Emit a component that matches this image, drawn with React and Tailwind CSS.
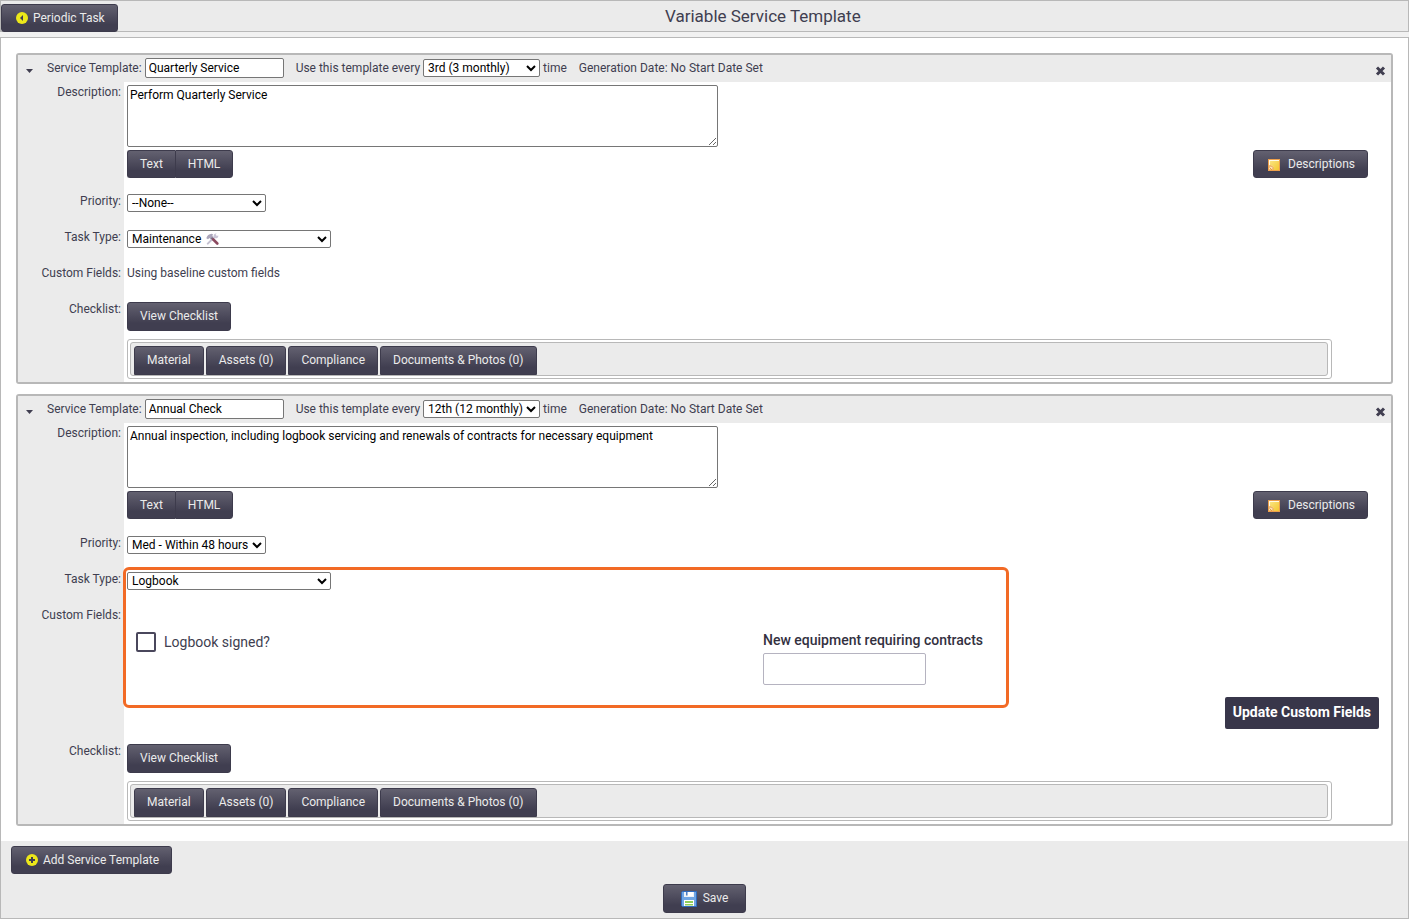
import { useId } from "react";
import clsx from "clsx";

const templates = [
  {
    name: "Quarterly Service",
    every: "3rd (3 monthly)",
    description: "Perform Quarterly Service",
    priority: "--None--",
    taskType: "Maintenance",
    hasCustomFields: false,
  },
  {
    name: "Annual Check",
    every: "12th (12 monthly)",
    description:
      "Annual inspection, including logbook servicing and renewals of contracts for necessary equipment",
    priority: "Med - Within 48 hours",
    taskType: "Logbook",
    hasCustomFields: true,
  },
];

const tabs = ["Material", "Assets (0)", "Compliance", "Documents & Photos (0)"];

const BackIcon = () => (
  <svg width="12" height="12" viewBox="0 0 12 12" aria-hidden="true">
    <circle cx="6" cy="6" r="6" fill="#ece81a" />
    <path d="M7 3v6L4 6z" fill="#403e50" />
  </svg>
);

const AddIcon = () => (
  <svg width="12" height="12" viewBox="0 0 12 12" aria-hidden="true">
    <circle cx="6" cy="6" r="6" fill="#ece81a" />
    <path d="M5 3h2v2h2v2H7v2H5V7H3V5h2z" fill="#403e50" />
  </svg>
);

const NoteIcon = () => (
  <svg width="12" height="12" viewBox="0 0 12 12" className="mt-0.5" aria-hidden="true">
    <defs>
      <linearGradient id="note" x1="0" y1="0" x2="1" y2="1">
        <stop offset="0" stopColor="#fbe88e" />
        <stop offset="1" stopColor="#f3c62c" />
      </linearGradient>
    </defs>
    <rect x=".5" y=".5" width="11" height="11" fill="url(#note)" stroke="#eda04c" />
    <path d="M1 1h10v1H2v5H1z" fill="#fffbe8" />
    <path d="M1 6.500h3L5.500 8v3H1z" fill="#fbe3b5" />
    <path d="M1 7h2.500L5 8.500V11M1.500 8.500L4 11M1.500 10.500h1" stroke="#e8973a" fill="none" />
  </svg>
);

const SaveIcon = () => (
  <svg width="16" height="16" viewBox="0 0 16 16" className="mt-0.5" aria-hidden="true">
    <path d="M1.500 .5h14v15h-14l-1-1v-13z" fill="#6fa5e4" stroke="#2f6cc0" />
    <path d="M3 1h10v5H3z" fill="#eef2f7" />
    <path d="M5 1h1.500v3.500H5z" fill="#4c7fc6" />
    <path d="M7 1h5v4H7z" fill="#fff" />
    <path d="M3 9h10v6H3z" fill="#fff" />
    <path d="M4 10h8v2H4zM4 13h8v1.500H4z" fill="#8fce5a" />
  </svg>
);

const ToolsIcon = () => (
  <svg width="13" height="12" viewBox="0 0 13 12" aria-hidden="true">
    <path d="M1.800 10.600L9.500 3" stroke="#c3bfd0" strokeWidth="2" strokeLinecap="round" />
    <path d="M7.800 3.800A2.400 2.400 0 0 1 10.600.600L9.500 2.100l1.200 1.200 1.500-1.100a2.400 2.400 0 0 1-3.100 3z" fill="#c9c5d6" />
    <path d="M.3 5.200C1 2.600 3 .800 5.800.700l1.500 1.100-1 .7 1 1.700-2.500 2.200-1.300-1.300L2 6.300z" fill="#aaa5ba" />
    <path d="M5.400 4.700l2 2" stroke="#7b6d84" strokeWidth="2" />
    <path d="M7.300 6.500l4 4" stroke="#8c4a60" strokeWidth="2.600" strokeLinecap="round" />
  </svg>
);

const CloseIcon = () => (
  <svg width="11" height="10" viewBox="0 0 11 10" aria-hidden="true">
    <path d="M2 1.500l7 7M9 1.500l-7 7" stroke="#403e50" strokeWidth="3" />
  </svg>
);

const Button = ({ className = "", children }) => (
  <button
    type="button"
    className={clsx(
      "flex items-center border border-[#3d3b4c] bg-linear-to-b from-[#636170] to-[#403e50] to-75% px-3 pb-px text-xs text-[#ebebeb]",
      className
    )}
  >
    {children}
  </button>
);

const Select = ({ id, value, className = "", ...props }) => (
  <select
    id={id}
    defaultValue={value}
    className={clsx(
      "h-[18px] rounded-[2px] border border-[#767676] bg-white text-xs text-black",
      className
    )}
    {...props}
  >
    <option>{value}</option>
  </select>
);

const Row = ({ label, htmlFor, className = "", children }) => (
  <div className="grid grid-cols-[106px_minmax(0,1fr)]">
    <div className="bg-[#ebebeb] pt-px pr-[3px] text-right leading-[18px]">
      {htmlFor ? <label htmlFor={htmlFor}>{label}</label> : <span>{label}</span>}
    </div>
    <div className={clsx("px-[3px] pt-[3px]", className)}>{children}</div>
  </div>
);

const CustomFields = ({ id }) => (
  <div className="pr-[9px]">
    <div className="grid grid-cols-2 pt-6">
      <label className="flex items-center gap-2 self-start pl-[9px] text-sm leading-5">
        <input
          type="checkbox"
          className="size-5 appearance-none rounded-[2px] border-2 border-[#4a475c] bg-white checked:bg-[#4a475c]"
        />
        Logbook signed?
      </label>
      <div className="pl-2.5">
        <label htmlFor={`${id}-contracts`} className="block text-sm leading-4 font-medium text-[#33313f]">
          New equipment requiring contracts
        </label>
        <input
          id={`${id}-contracts`}
          type="text"
          className="mt-[5px] block h-8 w-[163px] rounded-[2px] border border-[#b5b3c0] bg-white px-2 text-sm"
        />
      </div>
    </div>
    <div className="mt-3 flex justify-end">
      <button
        type="button"
        className="h-8 rounded-[2px] bg-[#38364a] px-2 pb-0.5 text-sm font-bold text-white"
      >
        Update Custom Fields
      </button>
    </div>
  </div>
);

const ServiceTemplate = ({ template }) => {
  const id = useId();

  return (
    <section className="rounded-[3px] border-2 border-[#b8b8b8] bg-white">
      <header className="flex h-[27px] items-center bg-[#ebebeb] pr-[5px] pb-0.5 pl-2">
        <button type="button" aria-label="Collapse" className="mt-1.5 mr-3.5 w-[7px]">
          <svg width="7" height="4" viewBox="0 0 7 4" className="block" aria-hidden="true">
            <path d="M0 0h7L3.500 4z" fill="#403e50" />
          </svg>
        </button>
        <label htmlFor={`${id}-name`}>Service Template:</label>
        <input
          id={`${id}-name`}
          type="text"
          defaultValue={template.name}
          className="mr-3 ml-[3px] h-5 w-[139px] rounded-[2px] border border-[#767676] bg-white px-[3px] text-black"
        />
        <label htmlFor={`${id}-every`}>Use this template every</label>
        <Select id={`${id}-every`} value={template.every} className="mx-[3px] w-[117px]" />
        <span>time</span>
        <span className="ml-3">Generation Date: No Start Date Set</span>
        <button type="button" aria-label="Remove template" className="mt-1.5 ml-auto">
          <CloseIcon />
        </button>
      </header>

      <Row
        label="Description:"
        htmlFor={`${id}-description`}
        className={template.hasCustomFields ? "h-[110px]" : "h-[109px]"}
      >
        <textarea
          id={`${id}-description`}
          defaultValue={template.description}
          className="block h-[62px] w-[591px] rounded-[2px] border border-[#767676] bg-white px-0.5 pt-px leading-4 text-black"
        />
        <div className="mt-[3px] flex justify-between pr-5">
          <div className="flex h-7">
            <Button className="rounded-l-[3px] border-r-0">Text</Button>
            <Button className="rounded-r-[3px]">HTML</Button>
          </div>
          <Button className="h-7 gap-2 rounded-[3px] pl-3.5">
            <NoteIcon />
            Descriptions
          </Button>
        </div>
      </Row>

      <Row label="Priority:" htmlFor={`${id}-priority`} className="h-9">
        <Select id={`${id}-priority`} value={template.priority} className="block w-[139px]" />
      </Row>

      <div className="relative">
        <Row label="Task Type:" htmlFor={`${id}-type`} className="h-9">
          <div className="relative w-[204px]">
            <Select id={`${id}-type`} value={template.taskType} className="block w-full" />
            {template.taskType === "Maintenance" && (
              <span className="pointer-events-none absolute top-[3px] left-[79px]">
                <ToolsIcon />
              </span>
            )}
          </div>
        </Row>

        <Row label="Custom Fields:" className={template.hasCustomFields ? "h-[136px]" : "h-9"}>
          {template.hasCustomFields ? (
            <CustomFields id={id} />
          ) : (
            <p className="leading-[14px]">Using baseline custom fields</p>
          )}
        </Row>

        {template.hasCustomFields && (
          <div className="pointer-events-none absolute -top-0.5 left-[105px] h-[141px] w-[70%] max-w-[886px] rounded-md border-3 border-[#f26a25]" />
        )}
      </div>

      <Row label="Checklist:" className="pb-[3px]">
        <Button className="h-[29px] rounded-[3px]">View Checklist</Button>
        <div className="mt-2 mr-14 rounded-[3px] border border-[#b8b8b8] py-0.5 pr-[3px] pl-0.5">
          <div className="flex gap-0.5 rounded-[3px] border border-[#b8b8b8] bg-[#ebebeb] pt-[3px] pl-[3px]">
            {tabs.map((tab) => (
              <Button key={tab} className="h-[29px] rounded-t-[3px]">
                {tab}
              </Button>
            ))}
          </div>
        </div>
      </Row>
    </section>
  );
};

export default function App() {
  return (
    <div className="min-h-screen bg-[#f1f1f1] font-[Roboto,sans-serif] text-xs text-[#403e50]">
      <header className="flex h-8 items-end border border-[#b8b8b8] bg-[#ebebeb]">
        <Button className="-mb-px h-7 gap-[5px] rounded-[3px] pl-3.5">
          <BackIcon />
          Periodic Task
        </Button>
        <h1 className="flex-1 self-center text-center text-[17px]">Variable Service Template</h1>
      </header>

      <main className="mt-[5px] border border-[#b8b8b8] bg-[#ebebeb]">
        <div className="flex flex-col gap-2.5 bg-white p-[15px]">
          {templates.map((template) => (
            <ServiceTemplate key={template.name} template={template} />
          ))}
        </div>
        <div className="px-2.5 pt-[5px] pb-[5px]">
          <Button className="h-7 gap-[5px] rounded-[3px] pl-3.5">
            <AddIcon />
            Add Service Template
          </Button>
          <div className="mt-2.5 flex justify-center">
            <Button className="h-[29px] gap-1.5 rounded-[3px] px-[17px]">
              <SaveIcon />
              Save
            </Button>
          </div>
        </div>
      </main>
    </div>
  );
}
